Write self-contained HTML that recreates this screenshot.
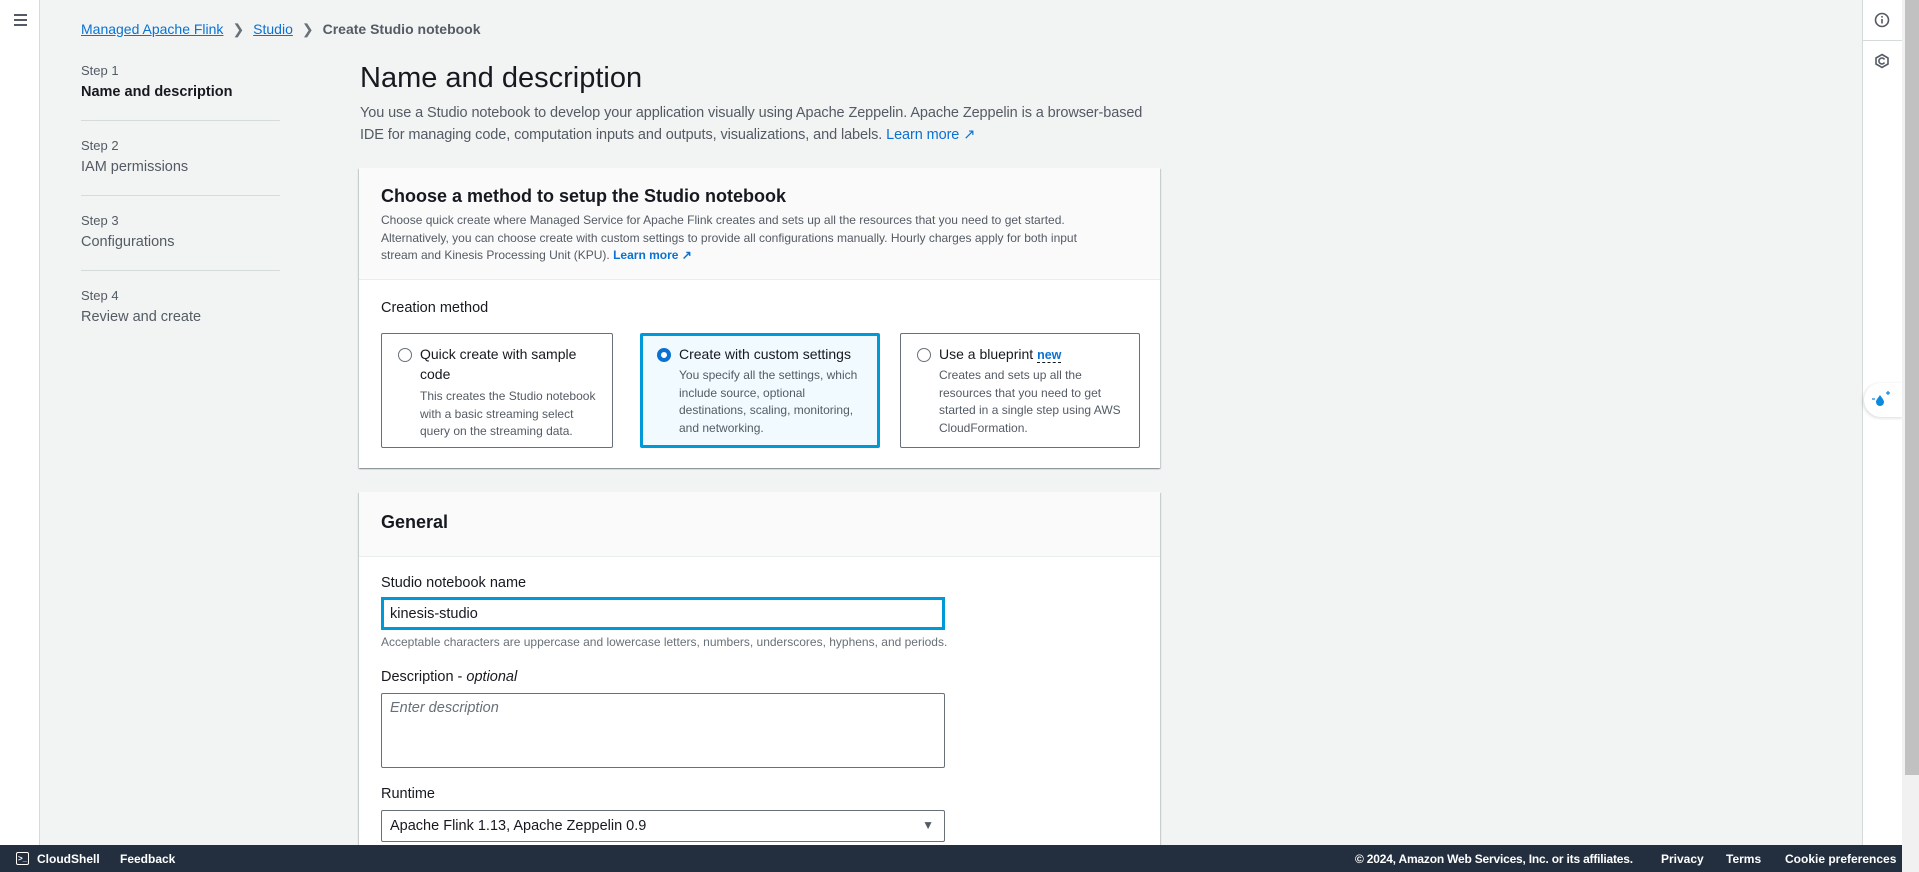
<!DOCTYPE html>
<html><head><meta charset="utf-8"><style>
*{box-sizing:border-box;margin:0;padding:0}
body{width:1919px;height:872px;overflow:hidden;background:#f2f3f3;font-family:"Liberation Sans",sans-serif;color:#16191f;position:relative}
.a{position:absolute;white-space:nowrap}
.lnk{color:#0972d3}
.sm{font-size:13px;color:#545b64}
.line{position:absolute;left:81px;width:199px;height:1px;background:#d5dbdb}
.panel{position:absolute;left:359px;width:801px;background:#fff;box-shadow:0 1px 1px rgba(0,28,36,.3),1px 1px 1px rgba(0,28,36,.15),-1px 1px 1px rgba(0,28,36,.15)}
.hd{background:#fafafa;border-bottom:1px solid #eaeded}
.tile{position:absolute;top:333px;height:115px;border:1px solid #687078;border-radius:2px;background:#fff}
.tile.sel{border:3px solid #0099d8;background:#f1faff}
.rad{position:absolute;left:16px;top:14px;width:14px;height:14px;border:1px solid #687078;border-radius:50%;background:#fff}
.tt{position:absolute;left:38px;top:10px;font-size:14px;line-height:20px;color:#16191f}
.td{font-size:12px;line-height:17.5px;color:#545b64}
.lbl{font-size:14.5px;color:#16191f}
</style></head><body>
<div class="a" style="left:0;top:0;width:40px;height:845px;background:#fff;border-right:1px solid #d5dbdb"></div>
<div class="a" style="left:14px;top:14px;width:13px;height:2px;background:#545b64;box-shadow:0 5px 0 #545b64,0 10px 0 #545b64"></div>

<div class="a" style="left:81px;top:21px;font-size:14px"><span class="lnk" style="text-decoration:underline">Managed Apache Flink</span><span style="color:#687078;margin:0 9px">&#x276F;</span><span class="lnk" style="text-decoration:underline">Studio</span><span style="color:#687078;margin:0 9px">&#x276F;</span><b style="color:#545b64">Create Studio notebook</b></div>

<div class="a sm" style="left:81px;top:63px">Step 1</div>
<div class="a" style="left:81px;top:84px;font-size:14.5px;font-weight:bold">Name and description</div>
<div class="line" style="top:120px"></div>
<div class="a sm" style="left:81px;top:138px">Step 2</div>
<div class="a" style="left:81px;top:159px;font-size:14.5px;color:#545b64">IAM permissions</div>
<div class="line" style="top:195px"></div>
<div class="a sm" style="left:81px;top:213px">Step 3</div>
<div class="a" style="left:81px;top:234px;font-size:14.5px;color:#545b64">Configurations</div>
<div class="line" style="top:270px"></div>
<div class="a sm" style="left:81px;top:288px">Step 4</div>
<div class="a" style="left:81px;top:309px;font-size:14.5px;color:#545b64">Review and create</div>

<div class="a" style="left:360px;top:62px;font-size:29px;color:#16191f">Name and description</div>
<div class="a" style="left:360px;top:102px;font-size:14.5px;line-height:22px;color:#545b64;white-space:normal;width:810px;letter-spacing:-0.1px">You use a Studio notebook to develop your application visually using Apache Zeppelin. Apache Zeppelin is a browser-based IDE for managing code, computation inputs and outputs, visualizations, and labels. <span class="lnk">Learn more &#x2197;</span></div>

<div class="panel" style="top:168px;height:300px">
 <div class="hd" style="height:112px;padding:18px 22px">
  <div style="font-size:18px;font-weight:bold">Choose a method to setup the Studio notebook</div>
  <div style="font-size:12px;line-height:17.5px;color:#545b64;margin-top:5px;width:725px">Choose quick create where Managed Service for Apache Flink creates and sets up all the resources that you need to get started. Alternatively, you can choose create with custom settings to provide all configurations manually. Hourly charges apply for both input stream and Kinesis Processing Unit (KPU). <b class="lnk">Learn more &#x2197;</b></div>
 </div>
</div>
<div class="a lbl" style="left:381px;top:300px">Creation method</div>
<div class="tile" style="left:381px;width:232px"><div class="rad"></div><div class="tt">Quick create with sample<br>code</div><div class="a td" style="left:38px;top:54px">This creates the Studio notebook<br>with a basic streaming select<br>query on the streaming data.</div></div>
<div class="tile sel" style="left:640px;width:240px"><div class="rad" style="left:14px;top:12px;border:4px solid #0972d3"></div><div class="tt" style="left:36px;top:8px">Create with custom settings</div><div class="a td" style="left:36px;top:31px">You specify all the settings, which<br>include source, optional<br>destinations, scaling, monitoring,<br>and networking.</div></div>
<div class="tile" style="left:900px;width:240px"><div class="rad"></div><div class="tt">Use a blueprint <span class="lnk" style="font-size:12.5px;font-weight:bold;border-bottom:1px dashed #16191f">new</span></div><div class="a td" style="left:38px;top:33px">Creates and sets up all the<br>resources that you need to get<br>started in a single step using AWS<br>CloudFormation.</div></div>

<div class="panel" style="top:492px;height:360px">
 <div class="hd" style="height:65px;padding:20px 22px"><div style="font-size:18px;font-weight:bold">General</div></div>
</div>
<div class="a lbl" style="left:381px;top:575px">Studio notebook name</div>
<div class="a" style="left:381px;top:597px;width:564px;height:33px;border:3px solid #0099d8;font-size:14.5px;padding:6px 6px">kinesis-studio</div>
<div class="a" style="left:381px;top:635px;font-size:12px;color:#687078">Acceptable characters are uppercase and lowercase letters, numbers, underscores, hyphens, and periods.</div>
<div class="a lbl" style="left:381px;top:669px">Description - <i>optional</i></div>
<div class="a" style="left:381px;top:693px;width:564px;height:75px;border:1px solid #687078;border-radius:2px;background:#fff;font-size:14.5px;font-style:italic;color:#687078;padding:6px 8px">Enter description</div>
<div class="a lbl" style="left:381px;top:786px">Runtime</div>
<div class="a" style="left:381px;top:810px;width:564px;height:32px;border:1px solid #687078;border-radius:2px;background:#fff;font-size:14.5px;padding:7px 8px">Apache Flink 1.13, Apache Zeppelin 0.9<span style="position:absolute;right:10px;top:7px;font-size:12px;color:#545b64">&#x25BC;</span></div>

<div class="a" style="left:1862px;top:0;width:40px;height:845px;background:#fff;border-left:1px solid #d5dbdb"></div>
<div class="a" style="left:1863px;top:40px;width:39px;height:1px;background:#d5dbdb"></div>
<svg class="a" style="left:1874px;top:12px" width="16" height="16" viewBox="0 0 16 16"><circle cx="8" cy="8" r="6.5" fill="none" stroke="#545b64" stroke-width="1.6"/><rect x="7.2" y="7" width="1.6" height="4.5" fill="#545b64"/><rect x="7.2" y="4" width="1.6" height="1.6" fill="#545b64"/></svg>
<svg class="a" style="left:1874px;top:53px" width="16" height="16" viewBox="0 0 16 16"><path d="M8 1.5 14 5v6l-6 3.5L2 11V5z" fill="none" stroke="#545b64" stroke-width="1.6"/><path d="M10.5 6.5A3 3 0 1 0 10.5 9.5" fill="none" stroke="#545b64" stroke-width="1.6"/></svg>
<div class="a" style="left:1864px;top:383px;width:40px;height:34px;background:#fff;border-radius:17px 0 0 17px;box-shadow:-1px 1px 3px rgba(0,0,0,.15)"></div>
<svg class="a" style="left:1870px;top:389px" width="24" height="22" viewBox="0 0 24 22"><path d="M10 6c2 3 4 5 4 7a4 4 0 0 1-8 0c0-2 2-4 4-7z" fill="#0a8be0"/><path d="M18 2v4M16 4h4M2 10h3" stroke="#0a8be0" stroke-width="1.2"/></svg>
<div class="a" style="left:1902px;top:0;width:17px;height:872px;background:#f1f1f1"></div>
<div class="a" style="left:1905px;top:0;width:14px;height:775px;background:#c1c1c1"></div>

<div class="a" style="left:0;top:845px;width:1902px;height:27px;background:#232f3e;color:#fff;font-size:12px;font-weight:bold">
 <div class="a" style="left:16px;top:7px;width:13px;height:13px;border:1px solid #fff;border-radius:2px;font-size:8px;line-height:11px;text-align:center">&gt;_</div>
 <div class="a" style="left:37px;top:7px">CloudShell</div>
 <div class="a" style="left:120px;top:7px">Feedback</div>
 <div class="a" style="left:1355px;top:7px;letter-spacing:-0.2px">© 2024, Amazon Web Services, Inc. or its affiliates.</div>
 <div class="a" style="left:1661px;top:7px">Privacy</div>
 <div class="a" style="left:1726px;top:7px">Terms</div>
 <div class="a" style="left:1785px;top:7px">Cookie preferences</div>
</div>
</body></html>
